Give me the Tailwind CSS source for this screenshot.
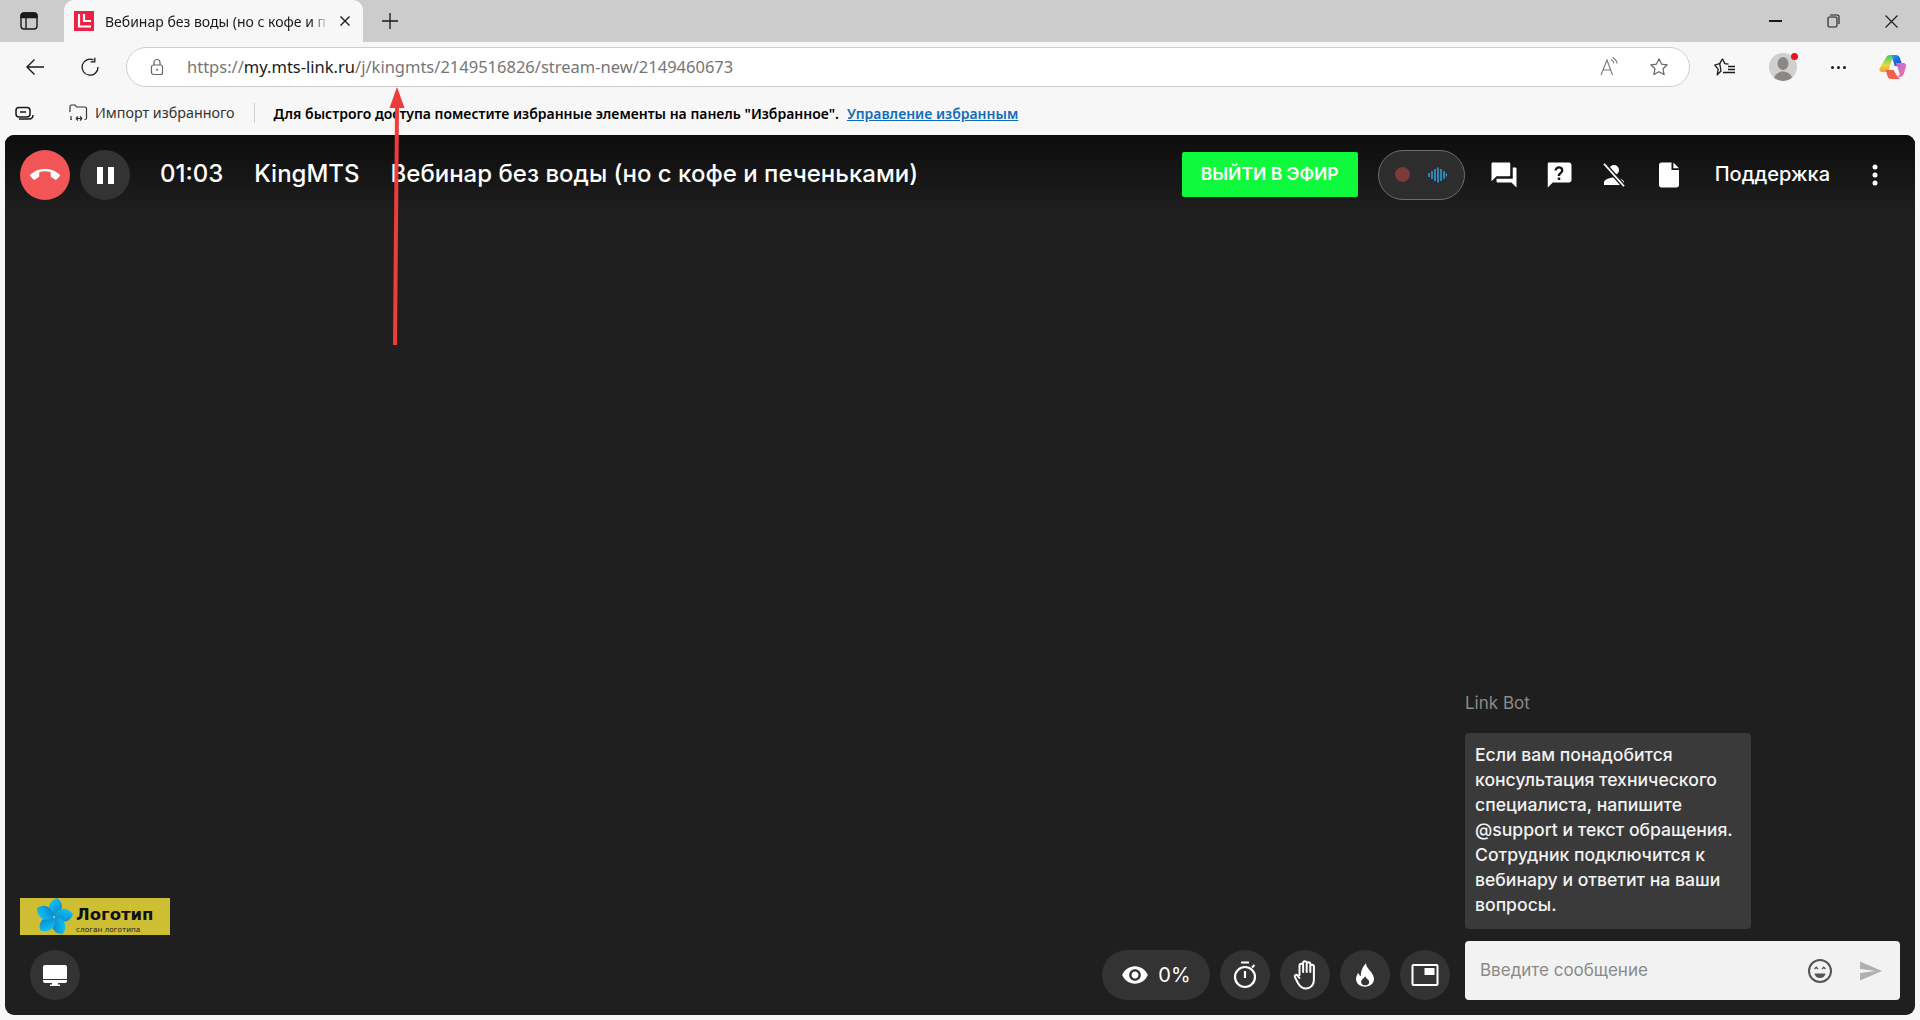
<!DOCTYPE html>
<html lang="ru">
  <head>
    <meta charset="UTF-8" />
    <script src="https://cdn.jsdelivr.net/npm/@tailwindcss/browser@4"></script>
    <title>Вебинар без воды</title>
  </head>
  <body class="relative h-[1020px] w-[1920px] overflow-hidden bg-[#f7f7f7] font-['Noto_Sans',sans-serif]">
    <div class="flex h-[1020px] flex-col">
      <!-- tab strip -->
      <div class="flex h-[42px] shrink-0 items-center bg-[#cccccc]">
        <div class="flex w-[64px] justify-center pr-[6px]">
          <svg width="18" height="18" viewBox="0 0 18 18" fill="none" stroke="#1a1a1a" stroke-width="1.4"><rect x="1" y="1" width="16" height="16" rx="3" /><path d="M6 5.500V17" /><path d="M1 4a3 3 0 0 1 3-3h10a3 3 0 0 1 3 3v1.500H1z" fill="#1a1a1a" /></svg>
        </div>
        <div class="flex h-[42px] w-[299px] items-center rounded-t-[10px] bg-[#f7f7f7] pl-[10px] pr-[12px]">
          <div class="flex h-[20px] w-[20px] shrink-0 items-center justify-center bg-[#f01f45]">
            <svg width="14" height="14" viewBox="0 0 14 14" fill="none" stroke="#fff" stroke-width="2.200"><path d="M2 0v12.500h12M7 0v7h7" /></svg>
          </div>
          <span class="ml-[11px] w-[224px] text-[14px] whitespace-nowrap text-[#1a1a1a] [mask-image:linear-gradient(to_right,black_92%,transparent)]">Вебинар без воды (но с кофе и п</span>
          <svg class="ml-auto shrink-0" width="12" height="12" viewBox="0 0 12 12" stroke="#1a1a1a" stroke-width="1.4"><path d="M1.500 1.500l9 9M10.500 1.500l-9 9" /></svg>
        </div>
        <div class="ml-[18px]">
          <svg class="block" width="18" height="18" viewBox="0 0 18 18" stroke="#1a1a1a" stroke-width="1.3"><path d="M9 1v16M1 9h16" /></svg>
        </div>
        <div class="ml-auto flex items-center">
          <div class="flex w-[58px] justify-center"><div class="h-[1.5px] w-[13px] bg-[#1a1a1a]"></div></div>
          <div class="flex w-[58px] justify-center">
            <svg width="13" height="14" viewBox="0 0 13 14" fill="none" stroke="#1a1a1a" stroke-width="1.1"><rect x="1" y="3" width="9" height="10" rx="1.500" /><path d="M3 1h7.500A1.500 1.500 0 0 1 12 2.500V10" /></svg>
          </div>
          <div class="flex w-[58px] justify-center">
            <svg width="13" height="13" viewBox="0 0 13 13" stroke="#1a1a1a" stroke-width="1.1"><path d="M.5.5l12 12M12.500.5l-12 12" /></svg>
          </div>
        </div>
      </div>

      <!-- address bar -->
      <div class="flex h-[50px] shrink-0 items-center bg-[#f7f7f7]">
        <div class="flex w-[70px] justify-center">
          <svg width="20" height="18" viewBox="0 0 20 18" fill="none" stroke="#1a1a1a" stroke-width="1.4"><path d="M19 9H2M9.500 1.500L2 9l7.500 7.500" /></svg>
        </div>
        <div class="flex w-[56px] pl-[10px]">
          <svg width="20" height="20" viewBox="0 0 20 20" fill="none" stroke="#1a1a1a" stroke-width="1.3"><path d="M13.500 3A8 8 0 1 0 18 10" /><path d="M13.800 1v4h-4.200" transform="translate(1 -.2)" /></svg>
        </div>
        <div class="flex h-[40px] w-[1564px] items-center rounded-[20px] border border-[#cfcfcf] bg-white pl-[22px] pr-[20px]">
          <svg width="16" height="18" viewBox="0 0 16 18" fill="none" stroke="#666" stroke-width="1.200"><rect x="2.500" y="7" width="11" height="9.500" rx="2" /><path d="M5 7V4.500a3 3 0 0 1 6 0V7" /><circle cx="8" cy="11.800" r="1" fill="#666" stroke="none" /></svg>
          <span class="ml-[22px] text-[16.500px] text-[#767676]">https://<span class="text-[#1a1a1a]">my.mts-link.ru</span>/j/kingmts/2149516826/stream-new/2149460673</span>
          <svg class="ml-auto" width="20" height="20" viewBox="0 0 20 20" fill="none" stroke="#777" stroke-width="1.100"><path d="M1 18L7 3l5.500 15M3.200 13h7.500" /><path d="M11 2.500a5 5 0 0 1 3 4M12.500.5a8 8 0 0 1 4.500 6" /></svg>
          <svg class="ml-[29px]" width="20" height="20" viewBox="0 0 20 20" fill="none" stroke="#666" stroke-width="1.200"><path d="M10 1.800l2.500 5.300 5.700.7-4.200 4 1.100 5.800-5.100-2.900-5.100 2.900 1.100-5.800-4.200-4 5.700-.7z" stroke-linejoin="round" /></svg>
        </div>
        <div class="flex flex-1 items-center">
          <svg class="ml-[24px]" width="22" height="20" viewBox="0 0 22 20" fill="none" stroke="#1a1a1a" stroke-width="1.300"><path d="M8.500 1.800l2.300 4.800 3.700.5M7 14l-3.800 3.700 1-5.400L.8 8l4.900-1.400z" stroke-linejoin="round" /><path d="M8.500 1.800L5.700 6.600M14 9.500h7M14 12.500h7M9 15.500h12" /></svg>
          <div class="relative ml-[33px] h-[28px] w-[28px] rounded-full bg-[#d2d0ce]">
            <svg class="block rounded-full" width="28" height="28" viewBox="0 0 28 28" fill="#8a8886"><ellipse cx="14" cy="10.500" rx="5.500" ry="6.500" /><path d="M5 25c1-4 5-6.500 9-6.500s8 2.500 9 6.500c-2 2-5.500 3-9 3s-7-1-9-3z" /></svg>
            <div class="absolute top-[0px] right-[-1px] h-[7px] w-[7px] rounded-full bg-[#e81123]"></div>
          </div>
          <div class="ml-[34px] flex w-[15px] justify-between">
            <div class="h-[3px] w-[3px] rounded-full bg-[#1a1a1a]"></div>
            <div class="h-[3px] w-[3px] rounded-full bg-[#1a1a1a]"></div>
            <div class="h-[3px] w-[3px] rounded-full bg-[#1a1a1a]"></div>
          </div>
          <svg class="ml-[33px]" width="27" height="26" viewBox="0 0 24 26" preserveAspectRatio="none">
            <defs>
              <linearGradient id="cpA" x1="0" y1="0" x2="1" y2="1"><stop offset="0" stop-color="#19c3e6" /><stop offset="0.500" stop-color="#1f6fe0" /><stop offset="1" stop-color="#2a3fc0" /></linearGradient>
              <linearGradient id="cpB" x1="0" y1="0" x2="0" y2="1"><stop offset="0" stop-color="#37c978" /><stop offset="0.600" stop-color="#e8d83a" /><stop offset="1" stop-color="#f4a13a" /></linearGradient>
              <linearGradient id="cpC" x1="0" y1="0" x2="1" y2="1"><stop offset="0" stop-color="#c56be0" /><stop offset="1" stop-color="#f0709a" /></linearGradient>
            </defs>
            <path d="M8 1h7c2 0 3 1 3.500 3L21 12h-7l-2-7C11.500 3 10 1.500 8 1z" fill="url(#cpA)" />
            <path d="M6 4c.7-2 2-3 4-3 1.500 0 2.500 1.500 2 3L8 18H3c-2 0-3-1.500-2.500-3.500z" fill="url(#cpB)" />
            <path d="M15 9h6c2.500 0 3.500 1.500 3 3.500L22 20c-.5 2-2 3-4 3h-3c2 0 3-1.500 3.500-3z" fill="url(#cpC)" />
            <path d="M6 16h7l2.500 5c.8 1.800 2 3 3.500 4H11c-2 0-3-1-3.500-3z" fill="#f0604d" />
          </svg>
        </div>
      </div>

      <!-- favorites bar -->
      <div class="flex h-[43px] shrink-0 items-start bg-[#f7f7f7] pt-[8px] text-[14px]">
        <div class="flex h-[26px] items-center">
          <svg class="ml-[15px]" width="20" height="16" viewBox="0 0 20 16" fill="none" stroke="#1a1a1a" stroke-width="1.500"><rect x="1" y="2.500" width="14" height="9.500" rx="3" /><path d="M5 7h6" /><path d="M4 14h10c2 0 4-1 4-4" /></svg>
          <svg class="ml-[33px]" width="20" height="20" viewBox="0 0 20 20" fill="none" stroke="#333" stroke-width="1.200"><path d="M2 9V3.500C2 2.500 2.500 2 3.500 2H7l1.500 2H17c1 0 1.500.5 1.500 1.500V15c0 1-.5 1.500-1.500 1.500h-.5M3 13v3.500h1M8 15.500h6M8 15.500l2-2M8 15.500l2 2M14 15.500l-2-2M14 15.500l-2 2" /></svg>
          <span class="ml-[7px] text-[14.300px] text-[#333]">Импорт избранного</span>
          <div class="ml-[19px] h-[20px] w-px bg-[#d0d0d0]"></div>
          <span class="ml-[19px] font-semibold text-black">Для быстрого доступа поместите избранные элементы на панель "Избранное".</span>
          <span class="ml-[8px] font-semibold text-[#0f6cbd] underline">Управление избранным</span>
        </div>
      </div>

      <!-- webinar panel -->
      <div class="flex flex-1 flex-col px-[5px] pb-[5px]">
        <div class="flex flex-1 flex-col overflow-hidden rounded-[9px] bg-[#1f1f1f] font-['Inter',sans-serif] text-white">
          <header class="flex h-[80px] shrink-0 items-center bg-gradient-to-b from-[#0d0d0d] to-[#1f1f1f] pl-[15px] pr-[33px]">
            <button class="flex h-[50px] w-[50px] items-center justify-center rounded-full bg-[#f25555]">
              <svg width="30" height="30" viewBox="0 0 24 24" fill="#fff"><path d="M12 9c-1.600 0-3.150.25-4.600.72v3.100c0 .39-.23.74-.56.9-.98.49-1.870 1.120-2.660 1.850-.18.18-.43.28-.7.28-.28 0-.53-.11-.71-.29L.29 13.080c-.18-.17-.29-.42-.29-.7 0-.28.11-.53.29-.71C3.340 8.780 7.460 7 12 7s8.660 1.780 11.710 4.670c.18.18.29.43.29.71 0 .28-.11.53-.29.71l-2.480 2.480c-.18.18-.43.29-.71.29-.27 0-.52-.11-.7-.28-.79-.74-1.690-1.360-2.670-1.850-.33-.16-.56-.5-.56-.9v-3.100C15.150 9.250 13.600 9 12 9z" /></svg>
            </button>
            <button class="ml-[10px] flex h-[50px] w-[50px] items-center justify-center gap-[5px] rounded-full bg-[#333333]">
              <span class="h-[17px] w-[6px] bg-white"></span>
              <span class="h-[17px] w-[6px] bg-white"></span>
            </button>
            <span class="mb-[2px] ml-[30px] text-[24px] font-medium">01:03</span>
            <span class="mb-[2px] ml-[31px] text-[24px] font-medium">KingMTS</span>
            <span class="mb-[2px] ml-[31px] text-[24px] font-medium">Вебинар без воды (но с кофе и печеньками)</span>
            <button class="mb-[1px] ml-auto flex h-[45px] w-[176px] items-center justify-center rounded-[2px] bg-[#0dfa3d] text-[17.500px] font-semibold text-white">ВЫЙТИ В ЭФИР</button>
            <div class="mb-[1px] ml-[20px] flex h-[50px] w-[87px] items-center justify-center gap-[18px] rounded-[25px] border border-[#6e6e6e] bg-[#2d2d2d]">
              <span class="h-[15px] w-[15px] rounded-full bg-[#7c3a38]"></span>
              <svg width="19" height="16" viewBox="0 0 19 16" stroke="#2f9ad6" stroke-width="1.600"><path d="M1 6v4M4 4v8M7 2v12M10 .5v15M13 2v12M16 4v8M18.500 6.500v3" /></svg>
            </div>
            <svg class="ml-[24px]" width="30" height="30" viewBox="0 0 24 24" fill="#fff"><path d="M21 6h-2v9H6v2c0 .55.45 1 1 1h11l4 4V7c0-.55-.45-1-1-1zm-4 6V3c0-.55-.45-1-1-1H3c-.55 0-1 .45-1 1v14l4-4h10c.55 0 1-.45 1-1z" /></svg>
            <svg class="ml-[25px]" width="30" height="30" viewBox="0 0 24 24" fill="#fff"><path fill-rule="evenodd" d="M4 2h16c1.100 0 2 .9 2 2v12c0 1.100-.9 2-2 2H7l-4 4V3c0-.55.45-1 1-1zm7 12v2h2v-2h-2zm1-9c-2 0-3.500 1.300-3.600 3.300h1.900c.1-.9.7-1.500 1.700-1.500 1 0 1.600.6 1.600 1.400 0 1.800-2.600 1.800-2.600 4.600h1.900c0-1.900 2.600-2.300 2.600-4.700C15.500 6.300 14 5 12 5z" /></svg>
            <svg class="ml-[25px]" width="30" height="30" viewBox="0 0 24 24" fill="#fff"><circle cx="12" cy="8" r="4" /><path d="M4 20v-2c0-2.700 5.300-4 8-4s8 1.300 8 4v2z" /><path d="M4 3l16 18" stroke="#1b1b1b" stroke-width="3.600" /><path d="M4 3l16 18" stroke="#fff" stroke-width="1.500" /></svg>
            <svg class="ml-[25px]" width="30" height="30" viewBox="0 0 24 24" fill="#fff"><path d="M6 2c-1.100 0-2 .9-2 2v16c0 1.100.9 2 2 2h12c1.100 0 2-.9 2-2V8h-6V2H6zm9.500 0v4.500H20z" /></svg>
            <span class="mb-[2px] ml-[31px] text-[20px] font-medium">Поддержка</span>
            <svg class="ml-[38px]" width="14" height="24" viewBox="0 0 14 24" fill="#fff"><circle cx="7" cy="4" r="2.500" /><circle cx="7" cy="12" r="2.500" /><circle cx="7" cy="20" r="2.500" /></svg>
          </header>

          <main class="flex flex-1 items-end pb-[15px] pl-[15px] pr-[15px]">
            <!-- logo and screen share -->
            <div class="flex flex-col">
              <div class="flex h-[37px] w-[150px] items-center bg-[#cdbe33] font-['DejaVu_Sans',sans-serif] text-[#111]">
                <svg class="ml-[15px] shrink-0" width="38" height="37" viewBox="0 0 38 37">
                  <defs>
                    <linearGradient id="petal" x1="0" y1="0" x2="1" y2="1"><stop offset="0" stop-color="#10d4f8" /><stop offset="1" stop-color="#0a76c8" /></linearGradient>
                  </defs>
                  <path d="M19 19C11 13 12 4 22 0c7 5 7 13-3 19z" fill="url(#petal)" />
                  <path d="M19 19C11 13 12 4 22 0c7 5 7 13-3 19z" fill="url(#petal)" transform="rotate(72 19 19)" />
                  <path d="M19 19C11 13 12 4 22 0c7 5 7 13-3 19z" fill="url(#petal)" transform="rotate(144 19 19)" />
                  <path d="M19 19C11 13 12 4 22 0c7 5 7 13-3 19z" fill="url(#petal)" transform="rotate(216 19 19)" />
                  <path d="M19 19C11 13 12 4 22 0c7 5 7 13-3 19z" fill="url(#petal)" transform="rotate(288 19 19)" />
                  <circle cx="19" cy="19" r="1" fill="#e0d040" />
                </svg>
                <div class="mt-[5px] ml-[3px] flex flex-col">
                  <span class="text-[16.500px] leading-[20px] font-bold">Логотип</span>
                  <span class="text-[7.300px] leading-[9px] text-[#222]">слоган логотипа</span>
                </div>
              </div>
              <button class="mt-[15px] ml-[10px] flex h-[50px] w-[50px] items-center justify-center rounded-full bg-[#333333]">
                <svg width="24" height="21" viewBox="0 0 24 21" fill="#fff"><path d="M2 0h20c1.100 0 2 .9 2 2v12H0V2C0 .9.9 0 2 0zM0 15h24v1c0 1.100-.9 2-2 2H2c-1.100 0-2-.9-2-2zM9 18h6v1.500h2V21H7v-1.500h2z" /></svg>
              </button>
            </div>

            <!-- reaction buttons -->
            <div class="ml-auto flex items-center gap-[10px]">
              <div class="flex h-[50px] w-[108px] items-center justify-center gap-[9px] rounded-[25px] bg-[#333333]">
                <svg width="28" height="28" viewBox="0 0 24 24" fill="#fff"><path d="M12 4.500C7 4.500 2.730 7.610 1 12c1.730 4.390 6 7.500 11 7.500s9.270-3.110 11-7.500c-1.730-4.390-6-7.500-11-7.500zM12 17c-2.760 0-5-2.240-5-5s2.240-5 5-5 5 2.240 5 5-2.240 5-5 5zm0-8c-1.660 0-3 1.340-3 3s1.340 3 3 3 3-1.340 3-3-1.340-3-3-3z" /></svg>
                <span class="text-[20px] text-white">0%</span>
              </div>
              <button class="flex h-[50px] w-[50px] items-center justify-center rounded-full bg-[#333333]">
                <svg width="26" height="28" viewBox="0 0 26 28" fill="none" stroke="#fff" stroke-width="2.200"><circle cx="13" cy="16" r="10" /><path d="M13 10v7M9 1.500h8M20 6.500l2.500-2.500" /></svg>
              </button>
              <button class="flex h-[50px] w-[50px] items-center justify-center rounded-full bg-[#333333]">
                <svg width="26" height="30" viewBox="0 0 26 30" fill="none" stroke="#fff" stroke-width="2" stroke-linejoin="round" stroke-linecap="round"><path d="M7.500 15V5.500a1.800 1.800 0 0 1 3.600 0V12M11.100 12V3a1.800 1.800 0 0 1 3.600 0v9M14.700 12V4a1.800 1.800 0 0 1 3.600 0v8M18.300 12V6.500a1.800 1.800 0 0 1 3.600 0V20c0 5-3.500 8.500-8 8.500-4 0-6-2-8-5.500l-3-6c-.8-1.600 1.300-3 2.600-1.500l2 2.500" /></svg>
              </button>
              <button class="flex h-[50px] w-[50px] items-center justify-center rounded-full bg-[#333333]">
                <svg width="18" height="26" viewBox="0 0 20 26" fill="#fff"><path fill-rule="evenodd" d="M11 0c.5 4 3 6 5.500 9.500C18.500 12 20 14.500 20 17.500c0 5-4.500 8.500-10 8.500S0 22.500 0 17.500c0-3 1.500-5 2.500-7 .5 2 1.500 3 3 3.500C5 9 7.500 4 11 0zm-.800 14c-.6 2.500-4.500 3.500-4.500 7 0 2 2.300 3.500 4.500 3.500s4.500-1.500 4.500-3.500c0-3-3.700-4-4.500-7z" /></svg>
              </button>
              <button class="flex h-[50px] w-[50px] items-center justify-center rounded-full bg-[#333333]">
                <svg width="28" height="24" viewBox="0 0 28 24" fill="#fff"><path fill-rule="evenodd" d="M2.500 1h23A2 2 0 0 1 27.500 3v18a2 2 0 0 1-2 2h-23a2 2 0 0 1-2-2V3a2 2 0 0 1 2-2zm0 2v18h23V3zM13.500 5h10v7h-10z" /></svg>
              </button>
            </div>

            <!-- chat -->
            <div class="ml-[15px] flex w-[435px] flex-col items-start">
              <span class="text-[17px] leading-[20px] text-[#8a8a8a]">Link Bot</span>
              <div class="mt-[20px] w-[286px] rounded-[4px] bg-[#3a3a3a] pt-[9px] pb-[12px] pl-[10px] text-[17.600px] leading-[25px] font-medium text-[#f2f2f2]">Если вам понадобится консультация технического специалиста, напишите @support и текст обращения. Сотрудник подключится к вебинару и ответит на ваши вопросы.</div>
              <div class="mt-[12px] flex h-[59px] w-full items-center rounded-[4px] bg-[#f2f2f2] pl-[15px] pr-[18px]">
                <span class="text-[17px] text-[#8a8a8a]">Введите сообщение</span>
                <svg class="ml-auto" width="24" height="24" viewBox="0 0 24 24" fill="none" stroke="#555" stroke-width="2"><circle cx="12" cy="12" r="11" /><path d="M6.500 14.500h11c-.5 3-2.800 4.500-5.500 4.500s-5-1.500-5.500-4.500z" fill="#555" stroke="none" /><path d="M6.500 10l1.700-1.800L10 10M14 10l1.700-1.800L17.500 10" stroke-width="1.300" /></svg>
                <svg class="ml-[28px]" width="22" height="20" viewBox="2 3 21 18" fill="#b0b0b0"><path d="M2.010 21L23 12 2.010 3 2 10l15 2-15 2z" /></svg>
              </div>
            </div>
          </main>
        </div>
      </div>
    </div>

    <!-- red annotation arrow lying over the page -->
    <svg class="absolute top-[80px] left-[380px]" width="30" height="270" viewBox="0 0 30 270" fill="#ee3b3b">
      <path d="M17 7L24.500 28H19L17 265H13L15 28H9.500z" />
    </svg>
  </body>
</html>
